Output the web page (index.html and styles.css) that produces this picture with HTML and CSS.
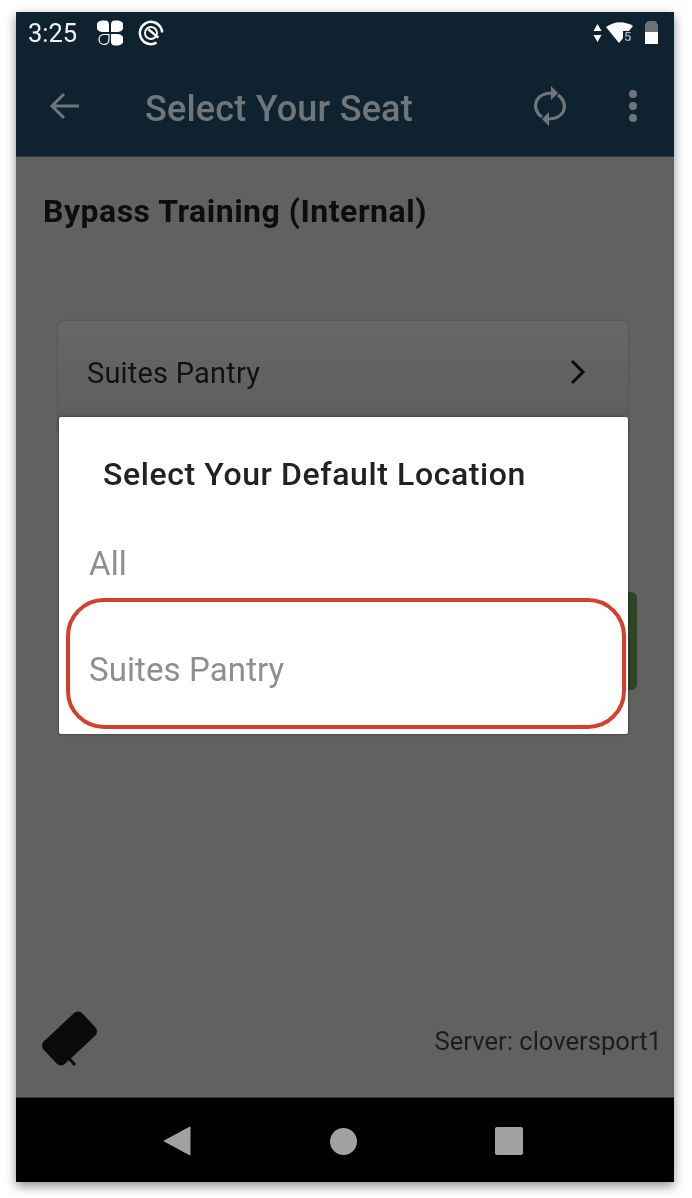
FILE: index.html
```html
<!DOCTYPE html>
<html lang="en">
<head>
<meta charset="utf-8">
<title>Select Your Seat</title>
<link rel="stylesheet" href="styles.css">
</head>
<body>
<div class="phone">
  <div class="statusbar">
    <span class="time">3:25</span>
    <svg class="ic-clover" viewBox="0 0 26 26"><g fill="#fff"><path d="M5 0.500h3a4 4 0 0 1 4 4V12H5a4.500 4.500 0 0 1 0-11.500z"/><path d="M21 0.500h-3a4 4 0 0 0-4 4V12h7a4.500 4.500 0 0 0 0-11.500z"/><path d="M21 25.500h-3a4 4 0 0 1-4-4V14h7a4.500 4.500 0 0 1 0 11.500z"/></g><path d="M12 14.500H6.500a5 5 0 1 0 5.500 5z" fill="none" stroke="#fff" stroke-width="1.200"/></svg>
    <svg class="ic-dial" viewBox="0 0 28 28"><circle cx="14" cy="14" r="12" fill="none" stroke="#fff" stroke-width="2.600" stroke-dasharray="62 13.400" transform="rotate(60 14 14)"/><circle cx="14" cy="14" r="6.500" fill="none" stroke="#fff" stroke-width="2"/><path d="M11 10l11 9" stroke="#fff" stroke-width="2.600"/></svg>
    <span class="spacer"></span>
    <svg class="ic-updown" viewBox="0 0 9 20"><path d="M4.500 1L8.500 8H.5zM4.500 19L.5 12h8z" fill="#fff"/></svg>
    <svg class="ic-wifi" viewBox="0 0 28 23"><path d="M0 6Q13-3 27 5L13 22z" fill="#fff"/><path d="M17 10h11v13H17z" fill="#0f222f"/><text class="wifi-num" x="18" y="20">5</text></svg>
    <svg class="ic-batt" viewBox="0 0 13 23"><path d="M4 0h5a3 3 0 0 1 3 3l1 0v9H0V3h1a3 3 0 0 1 3-3z" fill="#6b7479"/><rect y="11" width="13" height="12" fill="#fff"/></svg>
  </div>
  <div class="toolbar">
    <svg class="ic-back" viewBox="0 0 32 32"><path d="M30 16H4M15 4L3 16l12 12" fill="none" stroke="#70777b" stroke-width="3"/></svg>
    <span class="toolbar-title">Select Your Seat</span>
    <svg class="ic-sync" viewBox="0 0 32 40"><g fill="none" stroke="#70777b" stroke-width="3.200"><path d="M8 31C2 27 0 20 3 14 6 9 11 7 18 7"/><path d="M24 9C30 13 32 20 29 26 26 31 21 33 14 33"/></g><path d="M17 0l7 7-7 7zM15 40l-7-7 7-7z" fill="#70777b"/></svg>
    <div class="dots"><i></i><i></i><i></i></div>
  </div>
  <div class="content">
    <h1 class="event">Bypass Training (Internal)</h1>
    <div class="stage">
      <div class="card">
        <span>Suites Pantry</span>
        <svg class="ic-chevron" viewBox="0 0 16 26"><path d="M2 2l11 11L2 24" fill="none" stroke="#0b0b0b" stroke-width="3"/></svg>
      </div>
      <div class="green-btn"></div>
      <div class="dialog">
        <h2 class="dialog-title">Select Your Default Location</h2>
        <div class="option opt-all">All</div>
        <div class="option opt-suite">Suites Pantry</div>
      </div>
      <div class="ring"></div>
    </div>
    <div class="footer">
      <svg class="ic-tag" viewBox="0 0 60 60"><rect x="3" y="13" width="53" height="31" rx="6" transform="rotate(-43 29.500 28.500)" fill="#0b0b0b"/><path d="M26 45l9 10" stroke="#0b0b0b" stroke-width="3"/></svg>
      <span class="server">Server: cloversport1</span>
    </div>
  </div>
  <div class="navbar">
    <svg class="ic-navback" viewBox="0 0 28 30"><path d="M1 15L27 1v28z" fill="#a1a1a1" stroke="#a1a1a1" stroke-linejoin="round"/></svg>
    <div class="nav-home"></div>
    <div class="nav-recent"></div>
  </div>
</div>
</body>
</html>
```
FILE: styles.css
```css
* { box-sizing: border-box; }
html, body { margin: 0; background: #fff; }
body { width: 692px; height: 1198px; overflow: hidden; font-family: Roboto, "Liberation Sans", sans-serif; }
.phone {
  margin: 12px 0 0 16px;
  width: 658px;
  height: 1170px;
  display: flex;
  flex-direction: column;
  background: #616160;
  box-shadow: 0 4px 10px rgba(0,0,0,.45);
}
.statusbar, .toolbar, .event, .card, .green-btn, .dialog, .footer, .navbar { filter: blur(.5px); }
.statusbar {
  height: 43px;
  flex: none;
  display: flex;
  align-items: center;
  padding: 0 16px 2px 12px;
  background: #0f222f;
  color: #fff;
}
.time { font-size: 25.500px; color: #f2f2f2; margin-right: 20px; }
.ic-clover { width: 26px; height: 26px; margin-right: 15px; }
.ic-dial { width: 26px; height: 26px; }
.spacer { flex: 1; }
.ic-updown { width: 9px; height: 20px; margin-right: 4px; }
.ic-wifi { width: 28px; height: 23px; margin-right: 11px; }
.wifi-num { font-size: 13px; fill: #a8b0b4; font-weight: 500; font-family: Roboto, sans-serif; }
.ic-batt { width: 13px; height: 23px; }
.toolbar {
  height: 102px;
  flex: none;
  display: flex;
  align-items: center;
  padding: 0 37px 0 33px;
  background: #0f222f;
  border-bottom: 1px solid #2c3a42;
}
.ic-back { width: 32px; height: 32px; margin-right: 65px; }
.toolbar-title { flex: 1; font-size: 36px; letter-spacing: .2px; font-weight: 500; color: #70777b; padding-top: 6px; margin-left: -1px; }
.ic-sync { width: 32px; height: 40px; margin-right: 63px; }
.dots { display: flex; flex-direction: column; gap: 4px; }
.dots i { display: block; width: 8px; height: 8px; border-radius: 50%; background: #70777b; }
.content { flex: 1; display: flex; flex-direction: column; min-height: 0; }
.event { margin: 0; padding: 36px 0 0 27px; font-size: 32px; line-height: 36px; letter-spacing: .5px; font-weight: 700; color: #0d0d0d; }
.stage { position: relative; flex: 1; padding: 92px 46px 0 42px; }
.card {
  height: 110px;
  padding: 0 42px 6px 29px;
  display: flex;
  align-items: center;
  justify-content: space-between;
  font-size: 29px;
  letter-spacing: .2px;
  color: #111;
  border-radius: 6px 6px 0 0;
  background: linear-gradient(#676866, #5d5d5b);
  box-shadow: 0 0 2px rgba(0,0,0,.3);
}
.ic-chevron { width: 16px; height: 26px; margin-bottom: 2px; }
.green-btn {
  position: absolute;
  left: 600px;
  top: 363px;
  width: 21px;
  height: 98px;
  border-radius: 6px;
  background: #2e4424;
}
.dialog {
  position: absolute;
  left: 43px;
  top: 188px;
  width: 569px;
  height: 317px;
  background: #fff;
  box-shadow: 0 0 3px rgba(0,0,0,.5);
  border-radius: 2px;
}
.dialog-title { margin: 0; padding: 38px 0 0 44px; font-size: 32px; letter-spacing: .6px; line-height: 38px; font-weight: 500; color: #222; }
.option { padding-left: 30px; font-size: 33px; letter-spacing: .1px; line-height: 38px; color: #8e8e8e; }
.opt-all { margin-top: 52px; }
.opt-suite { margin-top: 68px; }
.ring {
  position: absolute;
  left: 50px;
  top: 369px;
  width: 560px;
  height: 131px;
  border: 4px solid #d63f2b;
  border-radius: 38px;
}
.footer { height: 100px; flex: none; display: flex; align-items: center; justify-content: space-between; padding: 0 12px 14px 24px; }
.ic-tag { width: 60px; height: 60px; }
.server { font-size: 25.600px; color: #1d1d1d; margin-top: 2px; }
.navbar {
  height: 85px;
  flex: none;
  display: flex;
  align-items: center;
  padding: 2px 0 0 147px;
  background: #000;
  border-top: 1px solid #333;
}
.ic-navback { width: 28px; height: 30px; margin-right: 139px; }
.nav-home { width: 27px; height: 27px; border-radius: 50%; background: #a1a1a1; margin-right: 138px; }
.nav-recent { width: 28px; height: 28px; border-radius: 2px; background: #a1a1a1; }
```
